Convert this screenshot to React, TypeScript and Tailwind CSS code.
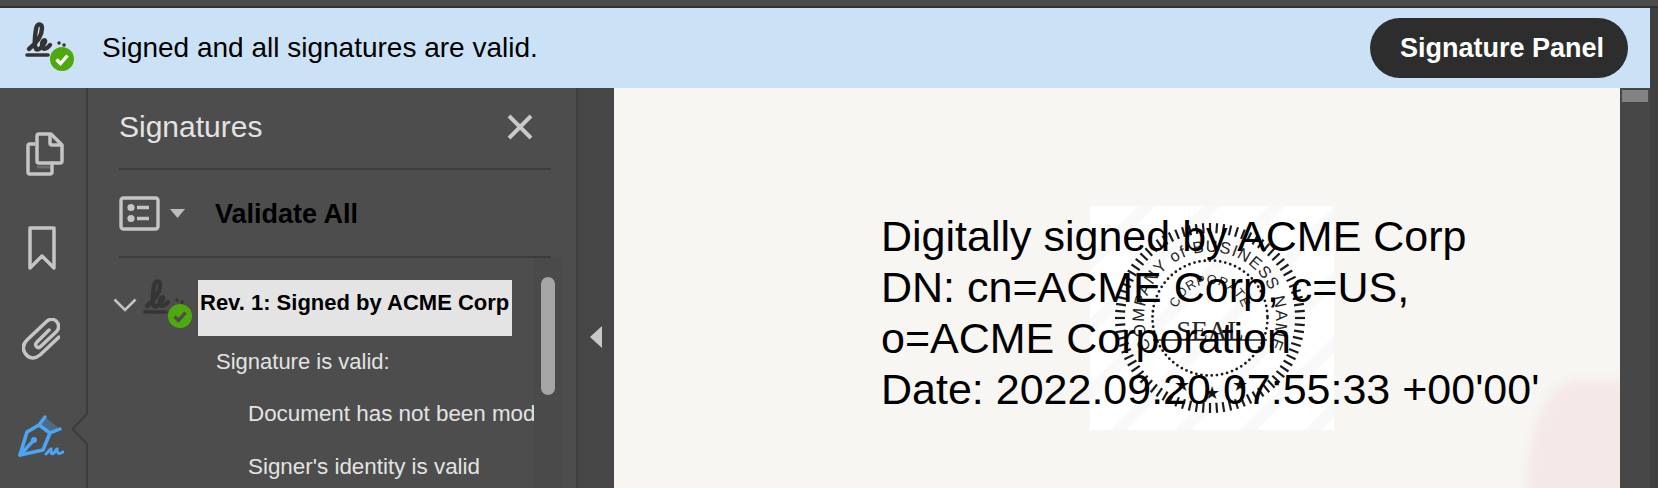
const TICKS = Array.from({ length: 84 }, (_, i) => (i * 360) / 84);

function polar(r: number, deg: number) {
  const a = ((deg - 90) * Math.PI) / 180;
  return `${120 + r * Math.cos(a)} ${112 + r * Math.sin(a)}`;
}

function SignatureIcon({ checkColor, inkColor }: { checkColor: string; inkColor: string }) {
  return (
    <svg width="50" height="50" viewBox="0 0 50 50" className="overflow-visible">
      <path
        d="M3 26C8 22 16 14 16 5C16 0 11 0 10 6C9 12 8 22 10 26C12 28 17 24 19 19C20 16 16 17 16 22C16 27 20 27 24 22"
        fill="none"
        stroke={inkColor}
        strokeWidth="4.4"
        strokeLinecap="round"
      />
      <path d="M33 20h.1M38 22h.1" stroke={inkColor} strokeWidth="3.4" strokeLinecap="round" />
      <path d="M1 32H22" stroke={inkColor} strokeWidth="3.6" strokeLinecap="round" />
      <circle cx="36" cy="36" r="12" fill="#4fa90c" />
      <path d="M30.5 36.5L34.5 40.5L41.5 32.5" fill="none" stroke={checkColor} strokeWidth="3.4" />
    </svg>
  );
}

function Seal() {
  return (
    <svg width="244" height="224" viewBox="0 0 244 224" className="block">
      <defs>
        <path id="outerArc" d={`M${polar(66, -140)}A66 66 0 1 1 ${polar(66, 140)}`} />
        <path id="innerArc" d={`M${polar(34, -110)}A34 34 0 1 1 ${polar(34, 110)}`} />
      </defs>
      {TICKS.map((deg) => (
        <line
          key={deg}
          x1={polar(85, deg).split(' ')[0]}
          y1={polar(85, deg).split(' ')[1]}
          x2={polar(95, deg).split(' ')[0]}
          y2={polar(95, deg).split(' ')[1]}
          stroke="#1c1c1c"
          strokeWidth="2.2"
        />
      ))}
      <circle cx="120" cy="112" r="57.5" fill="none" stroke="#1c1c1c" strokeWidth="2.8" strokeLinecap="round" strokeDasharray="0 5.2" />
      <text fontFamily="Liberation Sans, sans-serif" fontSize="16.5" letterSpacing="1.2" fill="#262626" textAnchor="middle">
        <textPath href="#outerArc" startOffset="50%">COMPANY of BUSINESS NAME</textPath>
      </text>
      <text fontFamily="Liberation Sans, sans-serif" fontSize="13" letterSpacing="0.6" fill="#262626" textAnchor="middle">
        <textPath href="#innerArc" startOffset="50%">CORPORATE</textPath>
      </text>
      <text x="120" y="134" fontFamily="Liberation Serif, serif" fontSize="27" fill="#262626" textAnchor="middle">
        SEAL
      </text>
      <path d="M63 134H177" stroke="#262626" strokeWidth="1.5" />
      <text x="92" y="185" fontSize="18" fontFamily="DejaVu Sans, sans-serif" fill="#111" textAnchor="middle">★</text>
      <text x="122" y="193" fontSize="18" fontFamily="DejaVu Sans, sans-serif" fill="#111" textAnchor="middle">★</text>
      <text x="150" y="185" fontSize="18" fontFamily="DejaVu Sans, sans-serif" fill="#111" textAnchor="middle">★</text>
    </svg>
  );
}

function Rail() {
  return (
    <div className="relative flex w-[88px] flex-shrink-0 flex-col border-r-2 border-[#3c3c3c] pt-[44px] pb-0">
      <svg width="38" height="44" viewBox="0 0 38 44" fill="none" stroke="#c5c5c5" strokeWidth="3.5" strokeLinejoin="round" className="ml-[26px]">
        <rect x="11" y="33.5" width="13" height="3" fill="#6d6d6d" stroke="none" />
        <path d="M13 2H25L36 13V29a2 2 0 0 1-2 2H13a2 2 0 0 1-2-2V4a2 2 0 0 1 2-2Z" />
        <path d="M24 2V11a2 2 0 0 0 2 2H36" />
        <path d="M9 12H4a2 2 0 0 0-2 2V40a2 2 0 0 0 2 2H24a2 2 0 0 0 2-2V32" />
      </svg>
      <svg width="28" height="44" viewBox="0 0 28 44" fill="none" stroke="#c5c5c5" strokeWidth="3.5" strokeLinejoin="round" className="mt-[50px] ml-[28px]">
        <path d="M2 2H26V42L14 30L2 42Z" />
      </svg>
      <svg width="38" height="42" viewBox="0 0 38 42" fill="none" stroke="#c5c5c5" strokeWidth="3.5" strokeLinecap="round" className="mt-[48px] ml-[22px]">
        <path d="M37 19L18 37C12 42 6 40 3 35C0 30 1 26 5 22L24 4C28 0 33 1 35 4C38 8 37 11 34 14L18 29C15 31 12 27 15 24L27 12" />
      </svg>
      <svg width="46" height="42" viewBox="0 0 46 42" fill="none" className="mt-[55px] ml-[18px]">
        <path d="M27 2L42 14L32 18L21 9Z" fill="#4f6a85" />
        <path d="M2 40L9 17L21 10L32 18L25 35Z" stroke="#4aa5f5" strokeWidth="3.6" strokeLinejoin="round" />
        <path d="M27 2L21 10M42 14L32 18M2 40L16 25" stroke="#4aa5f5" strokeWidth="3.4" strokeLinecap="round" />
        <circle cx="16" cy="25" r="3" fill="#4aa5f5" />
        <path d="M28 39C30 37 32 34 33 34C33 38 33 40 36 38C38 36 38 34 39 34C39 38 40 40 45 37" stroke="#4aa5f5" strokeWidth="3" strokeLinecap="round" />
      </svg>
      {/* notch pointing at the open panel */}
      <svg width="18" height="34" viewBox="0 0 18 34" className="absolute top-[325px] left-[71px]">
        <path d="M16 1L1.5 16L16 31H18V1Z" fill="#4d4d4d" />
        <path d="M16 1L1.5 16L16 31" fill="none" stroke="#3c3c3c" strokeWidth="2" />
      </svg>
    </div>
  );
}

function SignaturesPanel() {
  return (
    <div className="flex w-[490px] flex-shrink-0 flex-col border-r-2 border-[#3e3e3e]">
      <div className="mr-[25px] ml-[31px] flex h-[82px] items-center justify-between border-b-2 border-[#3c3c3c]">
        <span className="mb-[3px] text-[30px] text-[#e3e3e3]">Signatures</span>
        <svg width="26" height="26" viewBox="0 0 26 26" stroke="#c9c9c9" strokeWidth="4" className="mr-[18px] mb-[3px]">
          <path d="M2 2L24 24M24 2L2 24" />
        </svg>
      </div>
      <div className="mr-[25px] ml-[31px] flex h-[88px] items-center border-b-2 border-[#3c3c3c]">
        <svg width="41" height="35" viewBox="0 0 41 35" fill="none" stroke="#c5c5c5" strokeWidth="3.4">
          <rect x="2" y="2" width="37" height="31" rx="2.5" />
          <circle cx="12" cy="11.5" r="3.6" fill="#c5c5c5" stroke="none" />
          <circle cx="12" cy="22.5" r="3.6" fill="#c5c5c5" stroke="none" />
          <path d="M18 11.5H30M18 22.5H30" />
        </svg>
        <svg width="15" height="9" viewBox="0 0 15 9" className="ml-[10px]">
          <path d="M0 0H15L7.5 9Z" fill="#bdbdbd" />
        </svg>
        <span className="ml-[30px] pt-[2px] text-[27px] leading-[32px] font-bold text-black">Validate All</span>
      </div>
      <div className="flex min-h-0 flex-1 overflow-hidden">
        <div className="w-[446px] flex-shrink-0 overflow-hidden whitespace-nowrap">
          <div className="mt-[22px] flex h-[56px]">
            <svg width="24" height="14" viewBox="0 0 24 14" fill="none" stroke="#c4c4c4" strokeWidth="2.6" className="mt-[18px] ml-[25px]">
              <path d="M1.5 1.5L12 12L22.5 1.5" />
            </svg>
            <div className="ml-[7px] h-[50px] w-[50px] flex-shrink-0">
              <SignatureIcon inkColor="#353535" checkColor="#4d4d4d" />
            </div>
            <div className="ml-[4px] h-[56px] w-[314px] flex-shrink-0 bg-[#e4e4e4] pt-[10px] pl-[2px] text-[22px] leading-[26px] font-bold text-black">
              Rev. 1: Signed by ACME Corp
            </div>
          </div>
          <div className="mt-[13px] ml-[128px] text-[22px] leading-[26px] text-[#e3e3e3]">Signature is valid:</div>
          <div className="mt-[26px] ml-[160px] text-[22.4px] leading-[26px] text-[#e3e3e3]">Document has not been modified</div>
          <div className="mt-[27px] ml-[160px] text-[22.4px] leading-[26px] text-[#e3e3e3]">Signer's identity is valid</div>
        </div>
        <div className="w-[28px] flex-shrink-0 border-x border-[#484848] bg-[#4a4a4a] px-[6px] pt-[19px]">
          <div className="h-[118px] rounded-full bg-[#a5a5a5]" />
        </div>
      </div>
    </div>
  );
}

function PdfPage() {
  return (
    <div className="relative min-w-0 flex-1 overflow-hidden bg-[#f7f6f3]">
      <div className="absolute top-[292px] left-[913px] h-[200px] w-[110px] rounded-tl-[50px_100px] rounded-tr-[20px_10px] bg-[#f5e9e7] blur-[4px]" />
      <div className="absolute top-[118px] left-[476px] bg-white bg-[repeating-linear-gradient(135deg,#ffffff_0px,#ffffff_34px,#f9f9f9_34px,#f9f9f9_46px)]">
        <Seal />
      </div>
      <div className="relative pt-[123px] pl-[267px] text-[43px] leading-[51px] whitespace-nowrap text-black">
        <div>Digitally signed by ACME Corp</div>
        <div>DN: cn=ACME Corp, c=US,</div>
        <div>o=ACME Corporation</div>
        <div>Date: 2022.09.20 07:55:33 +00'00'</div>
      </div>
    </div>
  );
}

export default function App() {
  return (
    <div className="flex h-[488px] w-[1658px] flex-col overflow-hidden bg-[#4d4d4d] font-['Liberation_Sans',Arial,sans-serif]">
      <div className="h-[8px] flex-shrink-0 border-b-2 border-[#333333] bg-[#4b4b4b]" />
      <div className="flex min-h-0 flex-1">
        <div className="flex min-w-0 flex-1 flex-col">
          <div className="flex h-[80px] flex-shrink-0 items-center bg-[#cbe2f6] pr-[22px] pl-[26px]">
            <SignatureIcon inkColor="#333333" checkColor="#ffffff" />
            <span className="ml-[26px] text-[28px] text-black">Signed and all signatures are valid.</span>
            <button className="ml-auto h-[60px] w-[258px] rounded-full bg-[#2d2d2d] pl-[6px] text-[27px] font-bold text-white">
              Signature Panel
            </button>
          </div>
          <div className="flex min-h-0 flex-1">
            <Rail />
            <SignaturesPanel />
            <div className="flex w-[36px] flex-shrink-0 bg-[#464646] pt-[238px] pl-[12px]">
              <svg width="12" height="22" viewBox="0 0 12 22">
                <path d="M12 0V22L0 11Z" fill="#c8c8c8" />
              </svg>
            </div>
            <PdfPage />
            <div className="w-[30px] flex-shrink-0 bg-[#474747] px-[2px] pt-[2px]">
              <div className="h-[12px] bg-[#828282]" />
            </div>
          </div>
        </div>
        <div className="w-[8px] flex-shrink-0 bg-[#3f3f3f]" />
      </div>
    </div>
  );
}
